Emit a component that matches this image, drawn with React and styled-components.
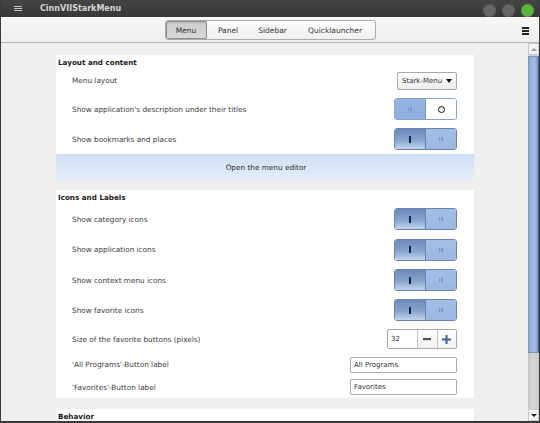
import React from "react";
import styled, { createGlobalStyle, css } from "styled-components";

const Global = createGlobalStyle`
  html, body { margin: 0; padding: 0; overflow: hidden; background: #3a3a3a; }
  body { font-family: "DejaVu Sans", "Liberation Sans", sans-serif; }
  * { box-sizing: border-box; }
`;

const Window = styled.div`
  width: 540px;
  height: 423px;
  display: flex;
  flex-direction: column;
  background: #f0f0f0;
  border-left: 1px solid #3a3a3a;
  border-right: 1px solid #3a3a3a;
  border-bottom: 2px solid #3a3a3a;
  overflow: hidden;
`;

const TitleBar = styled.div`
  height: 17px;
  flex: none;
  background: linear-gradient(#444444, #383838);
  display: flex;
  align-items: center;
  padding: 0 5px 0 13px;
`;

const TitleMenu = styled.div`
  width: 8px;
  display: flex;
  flex-direction: column;
  gap: 1px;
  margin-right: 18px;
  span { height: 1px; background: #c8c8c8; }
`;

const Title = styled.div`
  flex: 1;
  color: #d6d6d6;
  font-weight: bold;
  font-size: 8px;
`;

const Dots = styled.div`
  display: flex;
  gap: 6px;
  margin-top: 3px;
`;

const Dot = styled.div`
  width: 13px;
  height: 13px;
  border-radius: 50%;
  background: ${(p) => (p.$green ? "#5cb53f" : "#666666")};
  box-shadow: inset 0 0 0 1px ${(p) => (p.$green ? "#4e9a36" : "#5a5a5a")};
`;

const HeaderBar = styled.div`
  height: 26px;
  flex: none;
  background: linear-gradient(#f7f7f6, #efefee);
  border-bottom: 1px solid #b4b4b4;
  display: flex;
  align-items: center;
  justify-content: center;
  position: relative;
`;

const TabGroup = styled.div`
  display: flex;
  height: 20px;
  margin-top: 1px;
  border: 1px solid #ababab;
  border-radius: 3px;
  background: linear-gradient(#fbfbfb, #f0f0f0);
  overflow: hidden;
`;

const Tab = styled.div`
  display: flex;
  align-items: center;
  justify-content: center;
  width: ${(p) => p.$w}px;
  font-size: 7.5px;
  color: #333;
  ${(p) =>
    p.$active &&
    css`
      background: linear-gradient(#cdcdcd, #d8d8d8);
      box-shadow: inset 0 0 0 1px #8e8e8e, inset 0 2px 2px rgba(0,0,0,0.12);
      border-radius: 2px;
    `}
`;

const RightMenu = styled.div`
  position: absolute;
  right: 10px;
  top: 10px;
  width: 7px;
  display: flex;
  flex-direction: column;
  gap: 1.5px;
  span { height: 1.5px; background: #222; }
`;

const Body = styled.div`
  flex: 1;
  display: flex;
  min-height: 0;
`;

const Content = styled.div`
  flex: 1;
  padding: 12px 0 0 55px;
  display: flex;
  flex-direction: column;
  gap: 10px;
  overflow: hidden;
  background: #efefef;
`;

const Card = styled.div`
  width: 418px;
  background: #ffffff;
  flex: none;
  display: flex;
  flex-direction: column;
  margin-top: ${(p) => p.$mt || 0}px;
`;

const CardTitle = styled.div`
  height: ${(p) => p.$h || 12}px;
  padding: 3px 0 0 2px;
  font-size: 7.2px;
  font-weight: bold;
  color: #1a1a1a;
`;

const Row = styled.div`
  height: ${(p) => p.$h}px;
  display: flex;
  align-items: center;
  justify-content: space-between;
  padding: 0 17px 0 16px;
`;

const Label = styled.div`
  font-size: 7.3px;
  color: #3c3c3c;
`;

const Combo = styled.div`
  width: 60px;
  height: 18px;
  border: 1px solid #a9a9a9;
  border-radius: 2px;
  background: linear-gradient(#ffffff, #ececec);
  display: flex;
  align-items: center;
  justify-content: space-between;
  padding: 0 4px 0 4px;
  font-size: 7px;
  color: #333;
`;

const Caret = styled.span`
  width: 0;
  height: 0;
  border-left: 3.5px solid transparent;
  border-right: 3.5px solid transparent;
  border-top: 4px solid #111;
`;

const Toggle = styled.div`
  width: 63px;
  height: 22px;
  display: flex;
  border: 1px solid ${(p) => (p.$on ? "#6b83aa" : "#8ea3c4")};
  border-radius: 3px;
  overflow: hidden;
`;

const Half = styled.div`
  flex: 1;
  display: flex;
  align-items: center;
  justify-content: center;
  ${(p) =>
    p.$kind === "pressed" &&
    css`
      background: linear-gradient(#6c89ba, #88a3cd 55%, #c3d4ec);
      border-right: 1px solid #6b83aa;
    `}
  ${(p) =>
    p.$kind === "blue" &&
    css`
      background: linear-gradient(#a4bee6, #9bb7e2);
    `}
  ${(p) =>
    p.$kind === "blueleft" &&
    css`
      background: linear-gradient(#96b4e2, #8eaedf);
      border-right: 1px solid #7f98c0;
    `}
  ${(p) =>
    p.$kind === "white" &&
    css`
      background: #ffffff;
    `}
`;

const Bar = styled.span`
  width: 1.5px;
  height: 7px;
  background: #14243c;
`;

const Ticks = styled.span`
  display: flex;
  gap: 1px;
  span { width: 0.8px; height: 4px; background: #7d99c8; }
`;

const Ring = styled.span`
  width: 7px;
  height: 7px;
  border: 1.5px solid #111;
  border-radius: 50%;
`;

const SwitchControl = ({ on }) =>
  on ? (
    <Toggle $on>
      <Half $kind="pressed"><Bar /></Half>
      <Half $kind="blue"><Ticks><span /><span /><span /></Ticks></Half>
    </Toggle>
  ) : (
    <Toggle>
      <Half $kind="blueleft"><Ticks><span /><span /><span /></Ticks></Half>
      <Half $kind="white"><Ring /></Half>
    </Toggle>
  );

const EditorButton = styled.div`
  height: 26px;
  display: flex;
  align-items: center;
  justify-content: center;
  background: linear-gradient(#cfdff4, #e4edf9);
  font-size: 7.3px;
  color: #2c2c2c;
  padding-left: 2px;
`;

const Spin = styled.div`
  width: 70px;
  height: 20px;
  display: flex;
  border: 1px solid #a8a8a8;
  border-radius: 2px;
  background: #fff;
  overflow: hidden;
`;

const SpinEntry = styled.div`
  width: 30px;
  display: flex;
  align-items: center;
  padding-left: 3px;
  font-size: 7px;
  color: #333;
  border-right: 1px solid #c4c4c4;
`;

const SpinBtn = styled.div`
  flex: 1;
  display: flex;
  align-items: center;
  justify-content: center;
  background: linear-gradient(#ffffff, #f2f2f2);
  & + & { border-left: 1px solid #c4c4c4; }
`;

const Entry = styled.div`
  width: 107px;
  height: 16px;
  border: 1px solid #a9a9a9;
  border-radius: 2px;
  background: #fff;
  display: flex;
  align-items: center;
  padding-left: 3px;
  font-size: 7px;
  color: #333;
`;

const Scrollbar = styled.div`
  width: 12px;
  flex: none;
  display: flex;
  flex-direction: column;
  background: #d6d6d6;
  border-left: 1px solid #e8eef4;
`;

const Arrow = styled.div`
  height: 12px;
  flex: none;
  background: #f4f4f4;
  display: flex;
  align-items: center;
  justify-content: center;
  border: 1px solid #c9c9c9;
  span {
    width: 0; height: 0;
    border-left: 3px solid transparent;
    border-right: 3px solid transparent;
    ${(p) => (p.$up ? "border-bottom: 3px solid #9a9a9a;" : "border-top: 3px solid #222;")}
  }
`;

const Thumb = styled.div`
  height: 297px;
  flex: none;
  margin: 1px 0 0 0;
  background: linear-gradient(90deg, #8eacd8, #a6bfe6 60%, #7e9acb);
  border: 1px solid #7a94c0;
  border-right-color: #44628f;
`;

const Track = styled.div`
  flex: 1;
  background: linear-gradient(90deg, #c6c6c6, #d8d8d8 50%, #c8c8c8);
`;

export default function App() {
  return (
    <>
      <Global />
      <Window>
        <TitleBar>
          <TitleMenu><span /><span /><span /></TitleMenu>
          <Title>CinnVIIStarkMenu</Title>
          <Dots>
            <Dot />
            <Dot />
            <Dot $green />
          </Dots>
        </TitleBar>
        <HeaderBar>
          <TabGroup>
            <Tab $w={41} $active>Menu</Tab>
            <Tab $w={43}>Panel</Tab>
            <Tab $w={46}>Sidebar</Tab>
            <Tab $w={79}>Quicklauncher</Tab>
          </TabGroup>
          <RightMenu><span /><span /><span /></RightMenu>
        </HeaderBar>
        <Body>
          <Content>
            <Card>
              <CardTitle>Layout and content</CardTitle>
              <Row $h={27}>
                <Label>Menu layout</Label>
                <Combo>Stark-Menu <Caret /></Combo>
              </Row>
              <Row $h={30}>
                <Label>Show application's description under their titles</Label>
                <SwitchControl on={false} />
              </Row>
              <Row $h={30}>
                <Label>Show bookmarks and places</Label>
                <SwitchControl on />
              </Row>
              <EditorButton>Open the menu editor</EditorButton>
            </Card>
            <Card>
              <CardTitle $h={14}>Icons and Labels</CardTitle>
              <Row $h={30}>
                <Label>Show category icons</Label>
                <SwitchControl on />
              </Row>
              <Row $h={31}>
                <Label>Show application icons</Label>
                <SwitchControl on />
              </Row>
              <Row $h={30}>
                <Label>Show context menu icons</Label>
                <SwitchControl on />
              </Row>
              <Row $h={30}>
                <Label>Show favorite icons</Label>
                <SwitchControl on />
              </Row>
              <Row $h={28}>
                <Label>Size of the favorite buttons (pixels)</Label>
                <Spin>
                  <SpinEntry>32</SpinEntry>
                  <SpinBtn>
                    <svg width="8" height="8" viewBox="0 0 8 8"><rect x="0" y="3" width="8" height="2.2" fill="#555" /></svg>
                  </SpinBtn>
                  <SpinBtn>
                    <svg width="9" height="9" viewBox="0 0 9 9"><rect x="0" y="3.4" width="9" height="2.2" fill="#4a6a98" /><rect x="3.4" y="0" width="2.2" height="9" fill="#4a6a98" /></svg>
                  </SpinBtn>
                </Spin>
              </Row>
              <Row $h={23}>
                <Label>'All Programs'-Button label</Label>
                <Entry>All Programs</Entry>
              </Row>
              <Row $h={22}>
                <Label>'Favorites'-Button label</Label>
                <Entry>Favorites</Entry>
              </Row>
            </Card>
            <Card $mt={1}>
              <CardTitle>Behavior</CardTitle>
            </Card>
          </Content>
          <Scrollbar>
            <Arrow $up><span /></Arrow>
            <Thumb />
            <Track />
            <Arrow><span /></Arrow>
          </Scrollbar>
        </Body>
      </Window>
    </>
  );
}
